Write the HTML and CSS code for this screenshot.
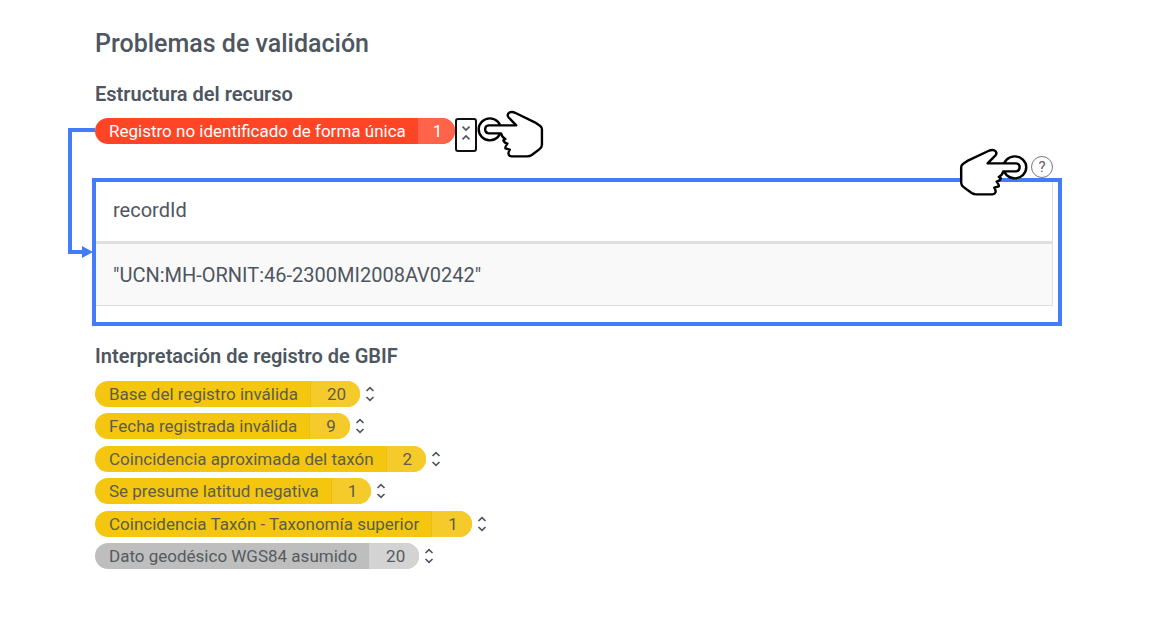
FILE: index.html
```html
<!DOCTYPE html>
<html lang="es">
<head>
<meta charset="utf-8">
<title>Problemas de validación</title>
<link rel="stylesheet" href="styles.css">
</head>
<body>
<svg class="symbols" aria-hidden="true">
  <symbol id="hand" viewBox="0 0 204 144" preserveAspectRatio="none">
    <circle cx="38" cy="58" r="33" fill="#fff" stroke="#000" stroke-width="7"/>
    <path d="M116 46H34Q24 47 24 58T34 70H71Q73 81 84 87L78 91Q80 98 90 101Q82 112 84 115L97 119Q91 128 94 134Q96 139 102 139H148Q156 139 162 135L184 118Q192 112 192 104V58Q192 52 187 48L171 37L114 9Q104 4 97 7Q88 12 92 20Q93 23 97 26Z" fill="#fff" stroke="#000" stroke-width="7" stroke-linejoin="round"/>
  </symbol>
  <symbol id="expand" viewBox="0 0 10 16">
    <path d="M1.500 5L5 1.700L8.500 5M1.500 11L5 14.300L8.500 11" fill="none" stroke="currentColor" stroke-width="1.700"/>
  </symbol>
  <symbol id="collapse" viewBox="0 0 10 16">
    <path d="M1.500 1.700L5 5L8.500 1.700M1.500 14.300L5 11L8.500 14.300" fill="none" stroke="currentColor" stroke-width="1.700"/>
  </symbol>
</svg>
<main class="page">
  <h1 class="title">Problemas de validación</h1>
  <section class="structure">
    <h2 class="heading">Estructura del recurso</h2>
    <div class="issue">
      <span class="pill pill-error"><span class="label">Registro no identificado de forma única</span><span class="count">1</span></span>
      <button class="toggle toggle-open" aria-label="Contraer"><svg class="chevrons"><use href="#collapse"/></svg></button>
      <svg class="hand hand-left" aria-hidden="true"><use href="#hand"/></svg>
    </div>
    <div class="details">
      <div class="help-row">
        <svg class="hand hand-right" aria-hidden="true"><use href="#hand"/></svg>
        <button class="help" aria-label="Ayuda">?</button>
      </div>
      <div class="frame">
        <table class="records">
          <thead><tr><th>recordId</th></tr></thead>
          <tbody><tr><td>"UCN:MH-ORNIT:46-2300MI2008AV0242"</td></tr></tbody>
        </table>
      </div>
    </div>
    <svg class="connector" viewBox="0 0 28 132" aria-hidden="true">
      <path d="M28 3H3V125H18" fill="none" stroke="#447bfa" stroke-width="4"/>
      <path d="M15 119L26 125L15 131Z" fill="#447bfa"/>
    </svg>
  </section>
  <section class="interpretation">
    <h2 class="heading">Interpretación de registro de GBIF</h2>
    <ul class="issues">
      <li class="issue"><span class="pill"><span class="label">Base del registro inválida</span><span class="count">20</span></span><button class="toggle" aria-label="Expandir"><svg class="chevrons"><use href="#expand"/></svg></button></li>
      <li class="issue"><span class="pill"><span class="label">Fecha registrada inválida</span><span class="count">9</span></span><button class="toggle" aria-label="Expandir"><svg class="chevrons"><use href="#expand"/></svg></button></li>
      <li class="issue"><span class="pill"><span class="label">Coincidencia aproximada del taxón</span><span class="count">2</span></span><button class="toggle" aria-label="Expandir"><svg class="chevrons"><use href="#expand"/></svg></button></li>
      <li class="issue"><span class="pill"><span class="label">Se presume latitud negativa</span><span class="count">1</span></span><button class="toggle" aria-label="Expandir"><svg class="chevrons"><use href="#expand"/></svg></button></li>
      <li class="issue"><span class="pill"><span class="label">Coincidencia Taxón - Taxonomía superior</span><span class="count">1</span></span><button class="toggle" aria-label="Expandir"><svg class="chevrons"><use href="#expand"/></svg></button></li>
      <li class="issue"><span class="pill pill-muted"><span class="label">Dato geodésico WGS84 asumido</span><span class="count">20</span></span><button class="toggle" aria-label="Expandir"><svg class="chevrons"><use href="#expand"/></svg></button></li>
    </ul>
  </section>
</main>
</body>
</html>
```
FILE: styles.css
```css
* { box-sizing: border-box; }
body {
  margin: 0;
  background: #fff;
  color: #4e565f;
  font-family: Roboto, "Liberation Sans", sans-serif;
}
.symbols { position: absolute; width: 0; height: 0; }
.page { padding: 28px 90px 40px 95px; }
.title { margin: 0; font-size: 25px; line-height: 32px; font-weight: 500; }
.heading { margin: 0; font-size: 20px; line-height: 24px; font-weight: 600; }
.structure { position: relative; margin-top: 22px; }
.issue { display: flex; align-items: center; height: 26px; }
.structure .issue { margin-top: 12px; }
.pill {
  display: flex;
  height: 26px;
  border-radius: 13px;
  overflow: hidden;
  background: #f4c60f;
  font-size: 17px;
  line-height: 26px;
  color: #5d5d4c;
  white-space: nowrap;
}
.label { padding: 0 12px 0 14px; }
.count { padding: 0 14px 0 16px; background: #f5cb2b; border-left: 1px solid #e9bf17; }
.pill-error { background: #ff4526; color: #fff; }
.pill-error .count { padding: 0 13px 0 14px; background: #ff6349; border-color: #ff6349; }
.pill-muted { background: #bebebe; color: #555b60; }
.pill-muted .count { background: #d3d3d3; border-color: #d3d3d3; }
.toggle {
  display: flex;
  align-items: center;
  justify-content: center;
  width: 20px;
  height: 26px;
  padding: 0;
  border: 0;
  background: none;
  color: #4e565f;
}
.toggle-open {
  width: 22px;
  height: 34px;
  margin-top: 8px;
  border: 2px solid #101010;
  border-radius: 3px;
  background: #fff;
}
.chevrons { width: 10px; height: 16px; }
.toggle-open .chevrons { margin-bottom: 4px; }
.hand { height: 48px; flex: none; }
.hand-left { width: 69px; margin-top: 6px; }
.hand-right { width: 71px; transform: scaleX(-1); }
.details { margin: 4px 0 0 -3px; }
.help-row { display: flex; justify-content: flex-end; align-items: flex-start; gap: 3px; height: 30px; padding-right: 9px; }
.help-row .hand { position: relative; z-index: 1; }
.help {
  width: 22px;
  height: 22px;
  margin-top: 8px;
  padding: 0;
  border: 1px solid #737a85;
  border-radius: 50%;
  background: #fff;
  color: #59616b;
  font: 15px/20px Roboto, sans-serif;
}
.frame { border: 4px solid #447bfa; padding: 0 5px 16px 0; }
.records { width: 100%; border-collapse: separate; border-spacing: 0; border-right: 1px solid #dfdfdf; font-size: 20px; line-height: 24px; }
.records th, .records td { padding: 16px 17px 19px; text-align: left; font-weight: 400; }
.records th { border-bottom: 3px solid #dfdfdf; }
.records td { padding: 19px 17px 18px; background: #f9f9f9; border-bottom: 1px solid #dfdfdf; }
.connector { position: absolute; left: -28px; top: 45px; width: 28px; height: 132px; }
.interpretation { margin-top: 18px; }
.issues {
  display: flex;
  flex-direction: column;
  justify-content: space-between;
  min-height: 188px;
  margin: 13px 0 0;
  padding: 0;
  list-style: none;
}
```
